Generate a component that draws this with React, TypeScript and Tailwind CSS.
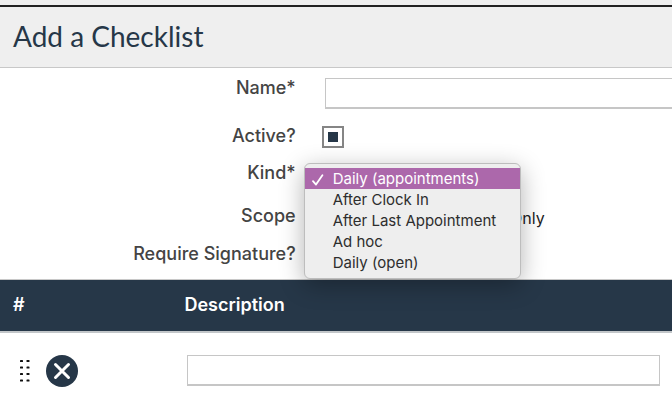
import { useState } from 'react'
import type { ReactNode } from 'react'

const KINDS = ['Daily (appointments)', 'After Clock In', 'After Last Appointment', 'Ad hoc', 'Daily (open)']

const inputClass =
  'block h-[31px] w-full border border-b-2 border-[#c6c6c6] bg-white px-2 text-base text-[#263748] outline-none'

type RowProps = {
  label: string
  htmlFor: string
  className: string
  children?: ReactNode
}

function FormRow({ label, htmlFor, className, children }: RowProps) {
  return (
    <div className={`flex items-start ${className}`}>
      <label htmlFor={htmlFor} className="w-[44%] shrink-0 text-right text-lg leading-5 font-medium text-[#444]">
        {label}
      </label>
      {children}
    </div>
  )
}

function KindMenu({ value, onSelect }: { value: string; onSelect: (kind: string) => void }) {
  return (
    <ul
      role="listbox"
      aria-label="Kind options"
      className="absolute top-0 -left-[18px] z-10 w-[217px] rounded-md border border-[#bdbdbd] bg-[#eeeeee] pt-1 pb-[5px] text-[15px] shadow-[0_6px_24px_rgba(0,0,0,0.3)]"
    >
      {KINDS.map((kind) => (
        <li
          key={kind}
          role="option"
          aria-selected={kind === value}
          onClick={() => onSelect(kind)}
          className={`flex h-[21px] items-center pt-0.5 whitespace-nowrap ${
            kind === value ? 'bg-[#ac68ab] text-white' : 'text-[#2d2d2d]'
          }`}
        >
          <span className="flex w-7 shrink-0 pl-[7px]">
            {kind === value && (
              <svg viewBox="0 0 12 12" className="h-3 w-3" fill="none" stroke="currentColor" strokeWidth="1.8">
                <path d="M1 7.2 4 10.6 10.4 1.2" strokeLinecap="round" strokeLinejoin="round" />
              </svg>
            )}
          </span>
          {kind}
        </li>
      ))}
    </ul>
  )
}

function DragHandle() {
  return (
    <svg viewBox="0 0 12 24" className="h-6 w-3" fill="#111">
      {[1, 7.5, 14, 20.5].map((y) => (
        <g key={y}>
          <rect x="1" y={y} width="3" height="2" rx="0.6" />
          <rect x="7.5" y={y} width="3" height="2" rx="0.6" />
        </g>
      ))}
    </svg>
  )
}

export default function App() {
  const [kind, setKind] = useState(KINDS[0])
  const [active, setActive] = useState(true)

  return (
    <div className="min-h-screen overflow-x-hidden bg-white font-['Inter','Liberation_Sans',sans-serif] text-base">
      <header className="border-b border-[#c8c8c8] bg-[#efefef] pt-[5px]">
        <div className="border-t-2 border-[#222] px-[13px] pt-[13px] pb-[15px]">
          <h1 className="font-['Lato',sans-serif] text-[28px] leading-8 text-[#263748]">Add a Checklist</h1>
        </div>
      </header>

      <form className="pt-[10px]">
        <FormRow label="Name*" htmlFor="name" className="h-12">
          <div className="ml-[29px] flex-1">
            <input id="name" type="text" className={`${inputClass} border-r-0`} />
          </div>
        </FormRow>
        <FormRow label="Active?" htmlFor="active" className="h-[37px]">
          <input
            id="active"
            type="checkbox"
            checked={active}
            onChange={(e) => setActive(e.target.checked)}
            className="ml-[26px] h-[22px] w-[22px] appearance-none border-2 border-[#858585] bg-white bg-clip-content p-1 checked:bg-[#263748]"
          />
        </FormRow>
        <FormRow label="Kind*" htmlFor="kind" className="h-[43px]">
          <div className="relative ml-[26px]">
            <select
              id="kind"
              value={kind}
              onChange={(e) => setKind(e.target.value)}
              className="h-8 w-48 appearance-none border border-[#999] bg-white text-transparent"
            >
              {KINDS.map((k) => (
                <option key={k}>{k}</option>
              ))}
            </select>
            <KindMenu value={kind} onSelect={setKind} />
          </div>
        </FormRow>
        <FormRow label="Scope" htmlFor="scope" className="h-[38px]">
          <output id="scope" className="ml-[26px] w-[223px] text-right leading-6 text-[#222]">
            Only
          </output>
        </FormRow>
        <FormRow label="Require Signature?" htmlFor="signature" className="h-[35px]">
          <input id="signature" type="checkbox" className="ml-[26px] h-5 w-5 appearance-none border-2 border-[#858585]" />
        </FormRow>
      </form>

      <table className="w-full table-fixed border-collapse text-left">
        <thead>
          <tr className="h-[52px] border-t border-b-2 border-t-[#c8c8c8] border-b-[#c2c6c9] bg-[#263748] text-lg text-white">
            <th className="w-[27%] pl-[13px] font-semibold">#</th>
            <th className="pl-[3px] font-semibold">Description</th>
          </tr>
        </thead>
        <tbody>
          <tr className="h-[77px]">
            <td className="pl-[19px]">
              <div className="flex items-center gap-[15px]">
                <DragHandle />
                <button type="button" aria-label="Remove item" className="h-8 w-8">
                  <svg viewBox="0 0 32 32" className="h-8 w-8">
                    <circle cx="16" cy="16" r="16" fill="#263748" />
                    <path d="M9.5 9.5 22.5 22.5M22.5 9.5 9.5 22.5" stroke="#fff" strokeWidth="3" strokeLinecap="round" />
                  </svg>
                </button>
              </div>
            </td>
            <td className="pr-3 pl-[6px]">
              <input type="text" aria-label="Description" className={inputClass} />
            </td>
          </tr>
        </tbody>
      </table>
    </div>
  )
}
